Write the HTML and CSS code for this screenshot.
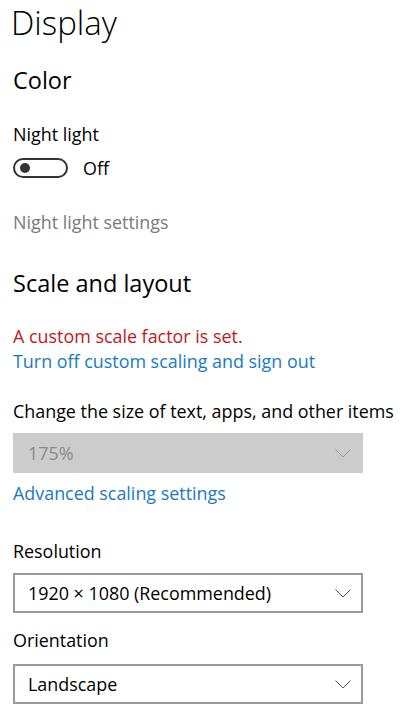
FILE: index.html
```html
<!DOCTYPE html>
<html>
<head>
<meta charset="utf-8">
<link rel="stylesheet" href="styles.css">
</head>
<body>
<main class="page">
  <h1 class="title">Display</h1>
  <h2 class="subtitle color-head">Color</h2>
  <div class="label nl-label">Night light</div>
  <div class="toggle-row">
    <span class="toggle"><span class="knob"></span></span>
    <span class="toggle-text">Off</span>
  </div>
  <div class="label muted nl-settings">Night light settings</div>

  <h2 class="subtitle scale-head">Scale and layout</h2>
  <div class="label tight warn">A custom scale factor is set.</div>
  <div class="label tight link">Turn off custom scaling and sign out</div>

  <div class="label size-label">Change the size of text, apps, and other items</div>
  <div class="select disabled scale-select">
    <span>175%</span>
    <svg class="chev" width="16" height="9" viewBox="0 0 16 9"><path d="M0.5 0.5 L8 8 L15.5 0.5" fill="none" stroke="currentColor" stroke-width="1"/></svg>
  </div>
  <div class="label link adv">Advanced scaling settings</div>

  <div class="label res-label">Resolution</div>
  <div class="select res-select">
    <span>1920 × 1080 (Recommended)</span>
    <svg class="chev" width="16" height="9" viewBox="0 0 16 9"><path d="M0.5 0.5 L8 8 L15.5 0.5" fill="none" stroke="currentColor" stroke-width="1"/></svg>
  </div>

  <div class="label or-label">Orientation</div>
  <div class="select or-select">
    <span>Landscape</span>
    <svg class="chev" width="16" height="9" viewBox="0 0 16 9"><path d="M0.5 0.5 L8 8 L15.5 0.5" fill="none" stroke="currentColor" stroke-width="1"/></svg>
  </div>
</main>
</body>
</html>
```
FILE: styles.css
```css
html, body {
  margin: 0;
  padding: 0;
  background: #ffffff;
}
body {
  font-family: "Open Sans", "Noto Sans", sans-serif;
  color: #000;
}
.page {
  padding: 0 0 0 13px;
  display: flex;
  flex-direction: column;
  align-items: flex-start;
}
.title {
  margin: 3px 0 0 -2px;
  font-size: 33px;
  line-height: 40px;
  font-weight: 300;
}
.subtitle {
  margin: 0;
  font-size: 23.5px;
  line-height: 30px;
  font-weight: 400;
}
.color-head { margin-top: 22px; }
.label {
  font-size: 17.9px;
  line-height: 24px;
}
.label.tight { line-height: 25px; }
.nl-label { margin-top: 27px; }
.toggle-row {
  margin-top: 12px;
  display: flex;
  align-items: center;
  gap: 15px;
  height: 20px;
}
.toggle {
  box-sizing: border-box;
  width: 55px;
  height: 20px;
  border: 2px solid #333;
  border-radius: 10px;
  display: flex;
  align-items: center;
  padding-left: 5px;
}
.knob {
  width: 10px;
  height: 10px;
  border-radius: 50%;
  background: #333;
}
.toggle-text {
  font-size: 17.9px;
  line-height: 20px;
}
.muted { color: #7a7a7a; }
.nl-settings { margin-top: 32px; }
.scale-head { margin-top: 34px; }
.warn { color: #c4161c; margin-top: 26px; }
.link { color: #1a7ac0; }
.size-label { margin-top: 25px; }
.select {
  box-sizing: border-box;
  width: 350px;
  height: 40px;
  border: 2px solid #999;
  background: #fff;
  display: flex;
  align-items: center;
  justify-content: space-between;
  padding: 0 10px 0 13px;
  font-size: 17.9px;
  color: #000;
}
.select .chev { color: #555; }
.select.disabled {
  background: #cccccc;
  border-color: #cccccc;
  color: #8a8a8a;
}
.select.disabled .chev { color: #999; }
.scale-select { margin-top: 10px; }
.adv { margin-top: 8px; }
.res-label { margin-top: 34px; }
.res-select { margin-top: 10px; }
.or-label { margin-top: 15px; }
.or-select { margin-top: 12px; }
```
